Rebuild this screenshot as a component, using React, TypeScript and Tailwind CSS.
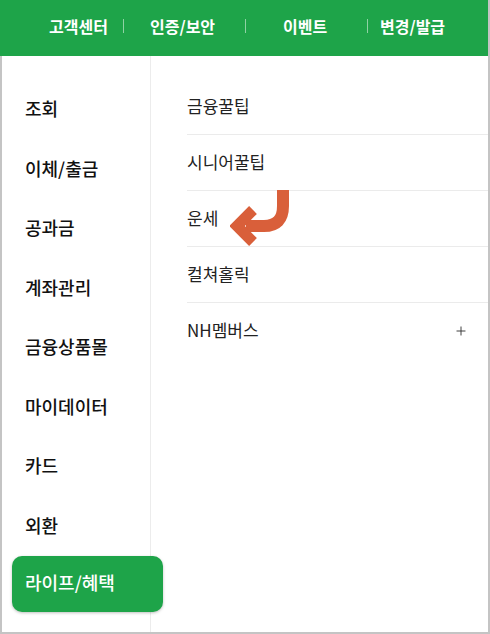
import { Plus } from 'lucide-react';

const LEFT_MENU = ['조회', '이체/출금', '공과금', '계좌관리', '금융상품몰', '마이데이터', '카드', '외환'];
const RIGHT_MENU = ['금융꿀팁', '시니어꿀팁', '운세', '컬쳐홀릭', 'NH멤버스'];

function CurvedArrow() {
  return (
    <svg width="64" height="60" viewBox="0 0 64 60" className="absolute left-[228px] top-[132px] z-20">
      {/* shaft */}
      <path d="M53 2 V18 Q53 38 34 38 H16" fill="none" stroke="#d95f3a" strokeWidth="12" />
      {/* head */}
      <path d="M23 22 L7 38 L23 54" fill="none" stroke="#d95f3a" strokeWidth="11" strokeLinejoin="miter" />
    </svg>
  );
}

export default function App() {
  return (
    <div
      className="w-[490px] h-[634px] flex flex-col bg-white overflow-hidden"
      style={{ fontFamily: '"Noto Sans CJK KR", "Noto Sans", sans-serif' }}
    >
      {/* Top green bar */}
      <div className="h-[56px] shrink-0 bg-[#1ea449] border-r-2 border-[#c4c4c4] flex items-center pb-[5px] text-white text-[16px] font-bold">
        <span className="ml-[49px] w-[74px]">고객센터</span>
        <span className="w-px h-[14px] bg-white/50" />
        <span className="ml-[26px] w-[95px]">인증/보안</span>
        <span className="w-px h-[14px] bg-white/50" />
        <span className="ml-[37px] w-[84px]">이벤트</span>
        <span className="w-px h-[14px] bg-white/50" />
        <span className="ml-[12px]">변경/발급</span>
      </div>

      <div className="flex-1 flex border-l-2 border-r-2 border-b-2 border-[#c4c4c4] relative">
        {/* Left category list */}
        <div className="w-[149px] shrink-0 border-r border-[#ececec] pt-[23px] relative z-10">
          {LEFT_MENU.map((item) => (
            <div key={item} className="h-[59.5px] flex items-center pl-[23px] text-[18px] font-medium text-[#111]">
              {item}
            </div>
          ))}
          <div className="mt-[1px] ml-[10px] w-[151px] h-[56px] rounded-[10px] bg-[#1ea449] shadow-[0_1px_3px_rgba(0,0,0,0.25)] flex items-center pl-[13px] pb-[3px] text-white text-[18px] font-medium">
            라이프/혜택
          </div>
        </div>

        {/* Right sub menu */}
        <div className="flex-1 pt-[23px] pl-[36px]">
          {RIGHT_MENU.map((item, i) => (
            <div
              key={item}
              className={`h-[56px] flex items-center justify-between pr-[20px] text-[17px] text-[#222] ${
                i < RIGHT_MENU.length - 1 ? 'border-b border-[#ebebeb]' : ''
              }`}
            >
              <span className="-mt-[2px]">{item}</span>
              {item === 'NH멤버스' && <Plus className="w-[14px] h-[14px] text-[#333]" strokeWidth={1.6} />}
            </div>
          ))}
        </div>

        <CurvedArrow />
      </div>
    </div>
  );
}
